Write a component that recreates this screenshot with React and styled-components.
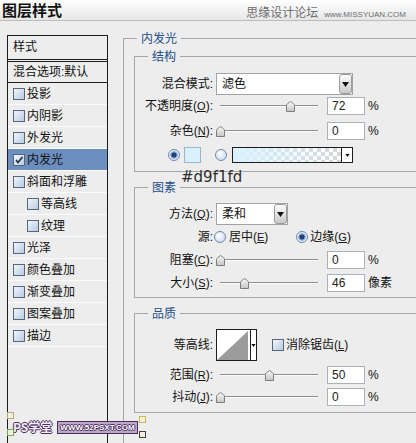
import React from 'react';
import styled, { createGlobalStyle } from 'styled-components';

const GlobalStyle = createGlobalStyle`
  body {
    margin: 0;
    background: #ededed;
    font-family: "Liberation Sans", "Noto Sans CJK SC", sans-serif;
    font-size: 12px;
    color: #111;
  }
`;

const ITEMS = [
  { name: '投影' },
  { name: '内阴影' },
  { name: '外发光' },
  { name: '内发光', on: true },
  { name: '斜面和浮雕' },
  { name: '等高线', indent: true },
  { name: '纹理', indent: true },
  { name: '光泽' },
  { name: '颜色叠加' },
  { name: '渐变叠加' },
  { name: '图案叠加' },
  { name: '描边' },
];

const Lbl = ({ text, k, w = 78 }) => (
  <Label $w={w}>
    {text}
    {k && (
      <>
        (<Key>{k}</Key>)
      </>
    )}
    :
  </Label>
);

const DownArrow = ({ w = 7, h = 5 }) => (
  <svg width={w} height={h} viewBox="0 0 7 5">
    <path d="M0 0 H7 L3.5 5 Z" fill="#111" />
  </svg>
);

const Slider = ({ value }) => (
  <SliderBox>
    <Track />
    <Thumb style={{ left: 4 + value * 98 - 4.5 }} width="9" height="11" viewBox="0 0 9 11">
      <defs>
        <linearGradient id="tg" x1="0" y1="0" x2="0" y2="1">
          <stop offset="0" stopColor="#fbfbfb" />
          <stop offset="1" stopColor="#c4c4c4" />
        </linearGradient>
      </defs>
      <path d="M0.5 10.5 V4.5 Q0.5 3.5 1.5 2.7 L4.5 0.5 L7.5 2.7 Q8.5 3.5 8.5 4.5 V10.5 Z" fill="url(#tg)" stroke="#7d7d7d" />
    </Thumb>
  </SliderBox>
);

const SliderRow = ({ text, k, value, num, unit = '%', mt }) => (
  <Row $mt={mt}>
    <Lbl text={text} k={k} />
    <Slider value={value} />
    <NumBox>{num}</NumBox>
    <Unit>{unit}</Unit>
  </Row>
);

const App = () => (
  <Page>
    <GlobalStyle />
    <TitleBar>
      <Title>图层样式</Title>
      <SiteMark>
        <SiteName>思缘设计论坛</SiteName>
        <SiteUrl>www.MISSYUAN.COM</SiteUrl>
      </SiteMark>
    </TitleBar>

    <Body>
      <StylePanel>
        <PanelHead>样式</PanelHead>
        <BlendRow>混合选项:默认</BlendRow>
        {ITEMS.map(it => (
          <ListRow key={it.name} $on={it.on} $indent={it.indent}>
            <Check>
              {it.on && (
                <svg width="10" height="10" viewBox="0 0 10 10">
                  <path d="M2 5 L4 7.5 L8.5 2" fill="none" stroke="#1d2a3a" strokeWidth="1.6" />
                </svg>
              )}
            </Check>
            <ItemText>{it.name}</ItemText>
          </ListRow>
        ))}
      </StylePanel>

      <Settings>
        <Group $w={320} $h={440} $pad="4px 0 0 10px">
          <Legend $ml={3}>内发光</Legend>

          <Group $pad="10px 0 5px 0">
            <Legend>结构</Legend>
            <Row>
              <Lbl text="混合模式" />
              <Select $w={137}>
                <SelectText>滤色</SelectText>
                <SelectBtn><DownArrow /></SelectBtn>
              </Select>
            </Row>
            <SliderRow text="不透明度" k="O" value={0.72} num="72" />
            <SliderRow text="杂色" k="N" value={0} num="0" mt={3} />
            <Row $mt={2} $pl={33}>
              <Radio $on />
              <Swatch />
              <Radio $ml={14} />
              <GradientBox>
                <GradientFill />
                <MiniDrop><DownArrow w={5} h={3} /></MiniDrop>
              </GradientBox>
            </Row>
          </Group>

          <Group $mt={8} $pad="9px 0 3px 0">
            <Legend>图素</Legend>
            <Row>
              <Lbl text="方法" k="Q" />
              <Select $w={72}>
                <SelectText>柔和</SelectText>
                <SelectBtn><DownArrow /></SelectBtn>
              </Select>
            </Row>
            <Row $mt={1}>
              <Lbl text="源" />
              <Radio $ml={1} />
              <OptText>居中(<Key>E</Key>)</OptText>
              <Radio $on $ml={28} />
              <OptText $ml={2}>边缘(<Key>G</Key>)</OptText>
            </Row>
            <SliderRow text="阻塞" k="C" value={0} num="0" mt={1} />
            <SliderRow text="大小" k="S" value={0.25} num="46" unit="像素" mt={1} />
          </Group>

          <Group $mt={8} $pad="9px 0 4px 0">
            <Legend>品质</Legend>
            <Row $h={32}>
              <Lbl text="等高线" />
              <ContourBox>
                <ContourPreview>
                  <svg width="33" height="30" viewBox="0 0 33 30">
                    <path d="M0 30 L31 1 V30 Z" fill="#9c9c9c" />
                  </svg>
                </ContourPreview>
                <ContourDrop><DownArrow w={5} h={3} /></ContourDrop>
              </ContourBox>
              <Check $ml={15} />
              <OptText $ml={2}>消除锯齿(<Key>L</Key>)</OptText>
            </Row>
            <SliderRow text="范围" k="R" value={0.5} num="50" mt={3} />
            <SliderRow text="抖动" k="J" value={0} num="0" />
          </Group>
        </Group>
      </Settings>
    </Body>

    <HexNote>#d9f1fd</HexNote>

    <Watermark>
      <WmLogo>PS学堂</WmLogo>
      <WmUrl>WWW.52PSXT.COM</WmUrl>
    </Watermark>
    <Corner $x={7} $y={412} $c="#b8a67a" />
    <Corner $x={7} $y={429} $c="#7aa85a" />
    <Corner $x={139} $y={416} $c="#c9b85a" />
    <Corner $x={139} $y={431} $c="#444" />
  </Page>
);

const Page = styled.div`
  position: relative;
  width: 416px;
  height: 443px;
  overflow: hidden;
  background: #ededed;
`;

const TitleBar = styled.div`
  display: flex;
  height: 20px;
  border-bottom: 1px solid #bcbcbc;
  background: linear-gradient(#ffffff, #e6e6e6);
`;

const Title = styled.div`
  padding-left: 2px;
  font-family: "Noto Sans CJK SC", sans-serif;
  font-size: 15px;
  font-weight: 700;
  line-height: 20px;
  color: #111;
`;

const SiteMark = styled.div`
  display: flex;
  align-items: baseline;
  align-self: flex-end;
  margin-left: auto;
  padding-right: 10px;
  color: #6e6e6e;
`;

const SiteName = styled.span`
  font-family: "Noto Sans CJK SC", sans-serif;
  font-size: 12px;
  line-height: 16px;
`;

const SiteUrl = styled.span`
  margin-left: 6px;
  font-size: 8px;
`;

const Body = styled.div`
  display: flex;
  align-items: flex-start;
`;

const StylePanel = styled.div`
  width: 99px;
  height: 420px;
  margin: 14px 0 0 7px;
  border: 1px solid #1c1c1c;
  flex: none;
`;

const PanelHead = styled.div`
  height: 23px;
  padding-left: 5px;
  line-height: 23px;
  border-bottom: 3px double #1c1c1c;
`;

const BlendRow = styled.div`
  height: 20px;
  padding-left: 5px;
  line-height: 20px;
  border-bottom: 1px solid #1c1c1c;
`;

const ListRow = styled.div`
  display: flex;
  align-items: center;
  height: 21px;
  padding-left: ${p => (p.$indent ? 19 : 5)}px;
  border-bottom: 1px solid #fbfbfb;
  background: ${p => (p.$on ? '#6c8fbf' : 'transparent')};
`;

const Check = styled.span`
  display: inline-flex;
  align-items: center;
  justify-content: center;
  width: 12px;
  height: 12px;
  margin-left: ${p => p.$ml || 0}px;
  box-sizing: border-box;
  border: 1px solid #55667d;
  background: linear-gradient(135deg, #f2f6fb, #b8cae2);
  flex: none;
`;

const ItemText = styled.span`
  margin-left: 2px;
  line-height: 14px;
`;

const Settings = styled.div`
  margin: 10px 0 0 15px;
  flex: none;
`;

const Group = styled.fieldset`
  margin: ${p => p.$mt || 0}px 0 0;
  padding: ${p => p.$pad};
  width: ${p => (p.$w ? `${p.$w}px` : 'auto')};
  height: ${p => (p.$h ? `${p.$h}px` : 'auto')};
  min-width: 0;
  box-sizing: border-box;
  border: 1px solid #a6a6a6;
`;

const Legend = styled.legend`
  margin-left: ${p => p.$ml ?? 13}px;
  padding: 0 4px;
  font-family: "Noto Sans CJK SC", sans-serif;
  font-size: 12px;
  line-height: 14px;
  color: #1e4d8c;
`;

const Row = styled.div`
  display: flex;
  align-items: center;
  height: ${p => p.$h || 22}px;
  margin-top: ${p => p.$mt || 0}px;
  padding-left: ${p => p.$pl || 0}px;
  white-space: nowrap;
`;

const Label = styled.span`
  width: ${p => p.$w}px;
  flex: none;
  text-align: right;
  line-height: 14px;
`;

const Key = styled.u`
  font-family: "Liberation Sans", sans-serif;
  font-size: 11px;
`;

const Select = styled.div`
  display: flex;
  width: ${p => p.$w}px;
  height: 22px;
  margin-left: 3px;
  box-sizing: border-box;
  border: 1px solid #a3a3a3;
  background: #fff;
`;

const SelectText = styled.span`
  flex: 1;
  padding-left: 5px;
  line-height: 20px;
`;

const SelectBtn = styled.span`
  display: flex;
  align-items: center;
  justify-content: center;
  width: 13px;
  box-sizing: border-box;
  border: 1px solid #9b9b9b;
  border-radius: 3px;
  background: linear-gradient(#fdfdfd, #c9c9c9);
`;

const SliderBox = styled.div`
  position: relative;
  display: flex;
  align-items: center;
  width: 106px;
  height: 22px;
  margin-left: 3px;
  flex: none;
`;

const Track = styled.div`
  flex: 1;
  margin: 0 4px;
  border-top: 1px solid #8f8f8f;
  border-bottom: 1px solid #fafafa;
`;

const Thumb = styled.svg`
  position: absolute;
  top: 6px;
`;

const NumBox = styled.div`
  width: 38px;
  height: 18px;
  margin-left: 5px;
  padding-left: 4px;
  box-sizing: border-box;
  border: 1px solid #aab1ba;
  background: #fff;
  line-height: 16px;
  font-size: 12px;
  color: #222;
`;

const Unit = styled.span`
  margin-left: 3px;
  line-height: 14px;
`;

const Radio = styled.span`
  width: 12px;
  height: 12px;
  margin-left: ${p => p.$ml || 0}px;
  box-sizing: border-box;
  border-radius: 50%;
  border: 1px solid #7088a8;
  flex: none;
  background: ${p =>
    p.$on
      ? 'radial-gradient(circle, #1f4274 0 2.2px, #7ea2d2 2.8px 3.4px, #e7eef8 4px)'
      : 'radial-gradient(circle at 40% 35%, #ffffff, #c0d2ea)'};
`;

const OptText = styled.span`
  margin-left: ${p => p.$ml || 3}px;
  line-height: 14px;
`;

const Swatch = styled.span`
  width: 17px;
  height: 16px;
  margin-left: 4px;
  box-sizing: border-box;
  border: 1px solid #9fb4ca;
  background: #d9f1fd;
  flex: none;
`;

const GradientBox = styled.div`
  display: flex;
  width: 121px;
  height: 16px;
  margin-left: 5px;
  box-sizing: border-box;
  border: 1px solid #1e1e1e;
  flex: none;
`;

const GradientFill = styled.span`
  flex: 1;
  background:
    linear-gradient(to right, #d9f1fd, rgba(217, 241, 253, 0)),
    conic-gradient(#d6d6d6 25%, #fff 0 50%, #d6d6d6 0 75%, #fff 0) 0 0 / 8px 8px;
`;

const MiniDrop = styled.span`
  display: flex;
  align-items: center;
  justify-content: center;
  width: 10px;
  border-left: 1px solid #1e1e1e;
  background: #fff;
`;

const ContourBox = styled.div`
  display: flex;
  width: 41px;
  height: 32px;
  margin-left: 3px;
  box-sizing: border-box;
  border: 1px solid #1e1e1e;
  background: #fff;
  flex: none;
`;

const ContourPreview = styled.span`
  display: flex;
  width: 33px;
  overflow: hidden;
`;

const ContourDrop = styled.span`
  display: flex;
  align-items: center;
  justify-content: center;
  flex: 1;
  border-left: 1px solid #1e1e1e;
`;

const HexNote = styled.div`
  position: absolute;
  left: 181px;
  top: 169px;
  font-family: "DejaVu Sans", sans-serif;
  font-size: 15px;
  line-height: 16px;
  color: #2e2e2e;
`;

const Watermark = styled.div`
  position: absolute;
  left: 13px;
  top: 420px;
  display: flex;
  align-items: center;
  gap: 5px;
`;

const WmLogo = styled.span`
  font-family: "Noto Sans CJK SC", sans-serif;
  font-size: 12px;
  font-weight: 700;
  line-height: 14px;
  color: #f3eef7;
  text-shadow: 1px 0 #4c2c60, -1px 0 #4c2c60, 0 1px #4c2c60, 0 -1px #4c2c60;
`;

const WmUrl = styled.span`
  padding: 0 2px;
  font-size: 8px;
  font-weight: 700;
  line-height: 11px;
  color: #fff;
  border: 1px solid #4c2c60;
  background: #b9a9c6;
  text-shadow: 1px 0 #4c2c60, -1px 0 #4c2c60, 0 1px #4c2c60, 0 -1px #4c2c60;
`;

const Corner = styled.span`
  position: absolute;
  left: ${p => p.$x}px;
  top: ${p => p.$y}px;
  width: 5px;
  height: 5px;
  border: 1px solid ${p => p.$c};
  background: #f4f0dc;
`;

export default App;
